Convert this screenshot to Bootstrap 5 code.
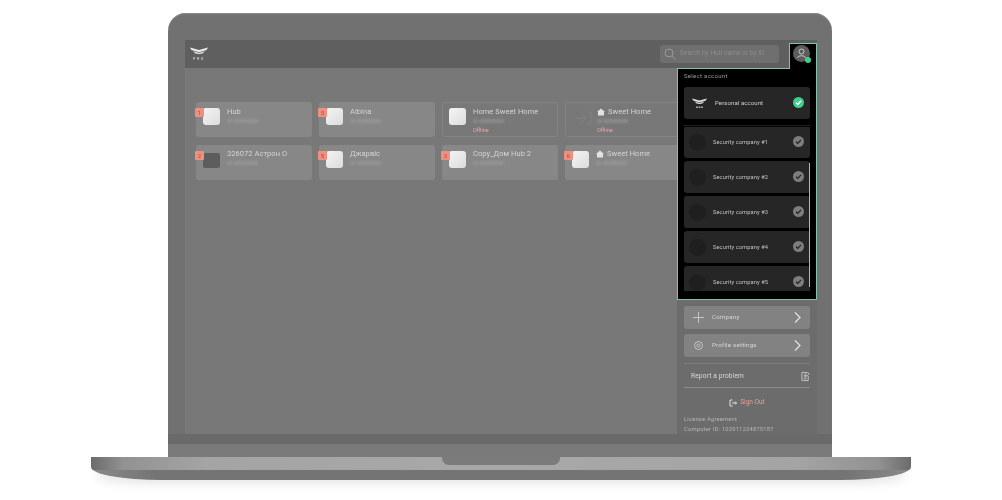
<!doctype html>
<html lang="en"><head><meta charset="utf-8"><title>Ajax PRO</title>
<link href="https://cdn.jsdelivr.net/npm/bootstrap@5.3.0/dist/css/bootstrap.min.css" rel="stylesheet">
<style>
html,body{height:100%;margin:0;background:#fff;overflow:hidden}
body{font-family:Roboto,"Liberation Sans",sans-serif;color:#d2d2d2}
.stage{width:1002px;height:500px;padding-top:13px}
.lid{width:664px;height:444px;margin-right:2px;background:#717171;border-radius:18px 18px 0 0;padding:27px 15px 0 17px;box-shadow:inset 0 1px 1px #8d8d8d;filter:blur(.3px)}
.display{width:632px;height:394px;background:#787878}
.topbar{height:28px;background:#5f5f5f;padding:0 38px 0 5px}
.logo-box{width:18px;line-height:1;color:#e0e0e0;font-size:3.8px;letter-spacing:1.6px;text-align:center;margin-top:-1px}
.logotxt{margin-top:3px}
.searchbox{width:119px;height:18px;background:#6f6f6f;border-radius:3px;padding-left:4px;font-size:6.4px;color:#8d8d8d;white-space:nowrap;overflow:hidden;margin-top:-1px;letter-spacing:.1px}
.searchbox span{filter:blur(.5px)}
.userpop{position:absolute;right:0;top:-25px;width:28px;height:26px;background:#000;border:1px solid #7fc4a8;border-bottom:0;z-index:2;padding:1px 0 0 3px}
.avatar{width:17px;height:17px;border-radius:50%;background:#5c5c5c;position:relative}
.avatar i{position:absolute;right:-1px;bottom:-1px;width:6px;height:6px;border-radius:50%;background:#3fd08e}
.hubs{flex:1 1 auto;overflow:hidden;padding:34px 0 0 11px}
.hubgrid{display:grid;grid-template-columns:repeat(4,116px);gap:8px 7px;width:600px}
.hubcard{height:35px;border-radius:3px;background:#878787;position:relative;padding:5px 0 0 31px;line-height:1}
.hubcard.off{background:#787878;border:1px solid #848484;padding:4px 0 0 30px}
.hubcard.ghostc{padding-left:31px}
.hubname{font-size:7.5px;letter-spacing:.05px;color:#d4d4d4;white-space:nowrap;display:flex;align-items:center;gap:3px;height:9px}
.hubname.lead2{margin-top:-1px}
.hubid{font-size:5.5px;color:#a8a8a8;filter:blur(.8px);margin-top:3px;white-space:nowrap}
.offl{font-size:5.5px;color:#e3a5a5;margin-top:3px;filter:blur(.2px)}
.hubico{position:absolute;left:7px;top:6px;width:17px;height:17px;border-radius:3px;background:linear-gradient(135deg,#f4f4f4,#dcdcdc)}
.hubcard.off .hubico{left:6px;top:5px}
.hubico.dark{background:#5d5d5d;border-radius:2px;height:15px;top:8px}
.hubbdg{position:absolute;left:-1px;top:6px;width:9px;height:9px;background:#ee8f80;border-radius:1px;font-size:6px;line-height:9px;text-align:center;color:#a84b3e;z-index:1}
.ghost{position:absolute;left:9px;top:6px;opacity:.35}
.sidecol{flex:0 0 140px;width:140px;background:#6c6c6c;position:relative}
.acctpane{height:232px;background:#000;border:1px solid #7fc4a8;padding:0 6px}
.acctlabel{font-size:6px;letter-spacing:.3px;color:#9a9a9a;padding-top:2px;height:18px}
.acct{height:32px;background:#262626;border-radius:3px;padding:0 6px;font-size:5.7px;letter-spacing:.1px;color:#c2c2c2;margin-bottom:3px;white-space:nowrap}
.acct.me{padding-left:8px;margin-bottom:6px;color:#cfcfcf;font-size:6px}
.acct b{font-weight:400;margin-left:7px}
.acct.me b{margin-left:8px;margin-top:-2px}
.acct .roundi{width:17px;height:17px;border-radius:50%;background:#1f1f1f;flex:none;margin-left:-1px}
.chk{width:11px;height:11px;border-radius:50%;background:#7d7d7d;flex:none;margin-left:auto;margin-top:-1px}
.chk.on{background:#3fd08e}
.acctsep{height:1px;background:#1c1c1c;margin:0 -1px 1px}
.acctscroll{height:164px;overflow:hidden;position:relative}
.acctscroll .acct:first-child{margin-top:-1px}
.thumb{position:absolute;right:0;top:36px;width:1.5px;height:124px;background:#b5b5b5}
.sidelow{padding:6px 7px 0 7px}
.sbtn{height:23px;background:#828282;border-radius:3px;padding:0 9px 0 9px;font-size:6.2px;letter-spacing:.2px;color:#d5d5d5;margin-bottom:5px}
.sbtn span{margin-left:8px}
.sbtn svg:last-child{margin-left:auto}
.reportrow{height:25px;border-top:1px solid #7d7d7d;border-bottom:1px solid #8a8a8a;padding:2px 0 0 7px;margin-top:6px;font-size:6.6px;letter-spacing:.15px;color:#dadada}
.signout{font-size:6.5px;color:#e0a09a;height:28px;gap:3px;padding-top:2px}
.licence{font-size:5.8px;letter-spacing:.2px;color:#b5b5b5;line-height:10px;white-space:nowrap;margin-top:-2px}
.chin{height:13px;background:#7a7a7a;margin:0 -15px 0 -17px;box-shadow:0 -1px 0 #686868}
.darkband{height:10px;background:#6a6a6a;margin:0 -15px 0 -17px}
.base{width:820px;height:23px;border-radius:0 0 70px 70px/0 0 13px 13px;position:relative;filter:blur(.3px);background:linear-gradient(90deg,#6b6b6b 0,#929292 4%,#a4a4a4 14%,#a8a8a8 50%,#a4a4a4 86%,#929292 96%,#6b6b6b 100%) 0 0/100% 13px no-repeat,linear-gradient(90deg,#8a8a8a,#747474 8%,#747474 92%,#8a8a8a) 0 13px/100% 10px no-repeat;box-shadow:0 8px 12px -6px rgba(0,0,0,.14)}
.notch{position:absolute;left:351px;top:0;width:118px;height:8px;background:#7b7b7b;border-radius:0 0 7px 7px}
</style></head>
<body>
<div class="stage d-flex flex-column align-items-center">
<div class="lid">
  <div class="display d-flex flex-column">
    <div class="topbar d-flex align-items-center justify-content-between flex-shrink-0">
      <div class="logo-box">
        <svg width="18" height="7" viewBox="0 0 18 7" class="d-block"><path d="M0 .5l9 2.500 9-2.500-1.500 2.500L9 5.200 1.500 3zM3 4.200l6 1.800 6-1.800-2.500 2.300-3.500.500-3.500-.500z" fill="#ececec"/></svg>
        <div class="logotxt">PRO</div>
      </div>
      <div class="searchbox d-flex align-items-center gap-1">
        <svg width="12" height="12" viewBox="0 0 12 12" fill="none" stroke="#9a9a9a" class="flex-shrink-0"><circle cx="5" cy="5" r="4"/><path d="M8 8l3.500 3.500"/></svg>
        <span>Search by Hub name or by ID</span>
      </div>
    </div>
    <div class="d-flex flex-grow-1" style="min-height:0">
      <div class="hubs">
        <div class="hubgrid">
          <div class="hubcard"><div class="hubbdg">1</div><div class="hubico"></div><div class="hubname">Hub</div><div class="hubid">ID 00000000</div></div>
          <div class="hubcard"><div class="hubbdg">5</div><div class="hubico"></div><div class="hubname">Albina</div><div class="hubid">ID 00000000</div></div>
          <div class="hubcard off"><div class="hubico"></div><div class="hubname">Home Sweet Home</div><div class="hubid">ID 00000000</div><div class="offl">Offline</div></div>
          <div class="hubcard off ghostc"><svg class="ghost" width="18" height="18" viewBox="0 0 18 18" fill="none" stroke="#9a9a9a"><path d="M1 9h9M7 5l4 4-4 4M12 3h4v12h-4"/></svg><div class="hubname"><svg width="8" height="8" viewBox="0 0 8 8"><path d="M4 .5L8 4H7v3.500H1V4H0z" fill="#e2e2e2"/></svg>Sweet Home</div><div class="hubid">ID 00000000</div><div class="offl">Offline</div></div>
          <div class="hubcard"><div class="hubbdg">2</div><div class="hubico dark"></div><div class="hubname lead2">326072 Астрон О</div><div class="hubid">ID 00000000</div></div>
          <div class="hubcard"><div class="hubbdg">5</div><div class="hubico"></div><div class="hubname lead2">Джарвіс</div><div class="hubid">ID 00000000</div></div>
          <div class="hubcard"><div class="hubbdg">3</div><div class="hubico"></div><div class="hubname lead2">Copy_Дом Hub 2</div><div class="hubid">ID 00000000</div></div>
          <div class="hubcard"><div class="hubbdg">6</div><div class="hubico"></div><div class="hubname lead2"><svg width="8" height="8" viewBox="0 0 8 8"><path d="M4 .5L8 4H7v3.500H1V4H0z" fill="#e2e2e2"/></svg>Sweet Home</div><div class="hubid">ID 00000000</div></div>
        </div>
      </div>
      <div class="sidecol">
        <div class="userpop">
          <div class="avatar"><svg width="17" height="17" viewBox="0 0 17 17" fill="none" stroke="#c9c9c9" class="d-block"><circle cx="8.500" cy="6.500" r="2.500"/><path d="M4.500 13c0-3 8-3 8 0"/></svg><i></i></div>
        </div>
        <div class="acctpane">
          <div class="acctlabel">Select account</div>
          <div class="acct me d-flex align-items-center">
            <svg width="15" height="11" viewBox="0 0 18 13" class="flex-shrink-0"><path d="M0 .5l9 2.500 9-2.500-1.500 2.500L9 5.200 1.500 3zM3 4.200l6 1.800 6-1.800-2.500 2.300-3.500.500-3.500-.500z" fill="#e2e2e2"/><path d="M5 10h2v2H5zM8 10h2v2H8zM11 10h2v2h-2z" fill="#bdbdbd"/></svg>
            <b>Personal account</b>
            <div class="chk on d-flex align-items-center justify-content-center"><svg width="9" height="9" viewBox="0 0 9 9" fill="none" stroke="#fff" stroke-width="1.500"><path d="M2 4.800l1.800 1.700L7 2.800"/></svg></div>
          </div>
          <div class="acctsep"></div>
          <div class="acctscroll">
            <div class="acct d-flex align-items-center"><div class="roundi"></div><b>Security company #1</b><div class="chk d-flex align-items-center justify-content-center"><svg width="9" height="9" viewBox="0 0 9 9" fill="none" stroke="#222" stroke-width="1.200"><path d="M2 4.800l1.800 1.700L7 2.800"/></svg></div></div>
            <div class="acct d-flex align-items-center"><div class="roundi"></div><b>Security company #2</b><div class="chk d-flex align-items-center justify-content-center"><svg width="9" height="9" viewBox="0 0 9 9" fill="none" stroke="#222" stroke-width="1.200"><path d="M2 4.800l1.800 1.700L7 2.800"/></svg></div></div>
            <div class="acct d-flex align-items-center"><div class="roundi"></div><b>Security company #3</b><div class="chk d-flex align-items-center justify-content-center"><svg width="9" height="9" viewBox="0 0 9 9" fill="none" stroke="#222" stroke-width="1.200"><path d="M2 4.800l1.800 1.700L7 2.800"/></svg></div></div>
            <div class="acct d-flex align-items-center"><div class="roundi"></div><b>Security company #4</b><div class="chk d-flex align-items-center justify-content-center"><svg width="9" height="9" viewBox="0 0 9 9" fill="none" stroke="#222" stroke-width="1.200"><path d="M2 4.800l1.800 1.700L7 2.800"/></svg></div></div>
            <div class="acct d-flex align-items-center"><div class="roundi"></div><b>Security company #5</b><div class="chk d-flex align-items-center justify-content-center"><svg width="9" height="9" viewBox="0 0 9 9" fill="none" stroke="#222" stroke-width="1.200"><path d="M2 4.800l1.800 1.700L7 2.800"/></svg></div></div>
            <div class="thumb"></div>
          </div>
        </div>
        <div class="sidelow">
          <div class="sbtn d-flex align-items-center">
            <svg width="11" height="11" viewBox="0 0 11 11" stroke="#c4c4c4" fill="none" class="flex-shrink-0"><path d="M5.500 0v11M0 5.500h11"/></svg>
            <span>Company</span>
            <svg width="7" height="11" viewBox="0 0 7 11" fill="none" stroke="#e2e2e2" stroke-width="1.200"><path d="M1 .5l5 5-5 5"/></svg>
          </div>
          <div class="sbtn d-flex align-items-center">
            <svg width="11" height="11" viewBox="0 0 11 11" stroke="#c4c4c4" fill="none" class="flex-shrink-0"><circle cx="5.500" cy="5.500" r="4"/><circle cx="5.500" cy="5.500" r="1.500"/></svg>
            <span>Profile settings</span>
            <svg width="7" height="11" viewBox="0 0 7 11" fill="none" stroke="#e2e2e2" stroke-width="1.200"><path d="M1 .5l5 5-5 5"/></svg>
          </div>
          <div class="reportrow d-flex align-items-center justify-content-between">
            <span>Report a problem</span>
            <svg width="9" height="11" viewBox="0 0 10 11" fill="none" stroke="#c9c9c9" class="flex-shrink-0"><path d="M6 1H1v9h7V5M3 4h2M3 6h3M3 8h3M7 .5l2 2-2.500 2.500H5V3z"/></svg>
          </div>
          <div class="signout d-flex align-items-center justify-content-center">
            <svg width="8" height="8" viewBox="0 0 8 8" fill="none" stroke="#e0e0e0"><path d="M3.500 1H1v6h2.500M3 4h4.500M6 2.500L7.500 4 6 5.500"/></svg>
            <span>Sign Out</span>
          </div>
          <div class="licence">License Agreement<br>Computer ID: 103911234875187</div>
        </div>
      </div>
    </div>
  </div>
  <div class="darkband"></div>
  <div class="chin"></div>
</div>
<div class="base"><div class="notch"></div></div>
</div>
</body></html>
